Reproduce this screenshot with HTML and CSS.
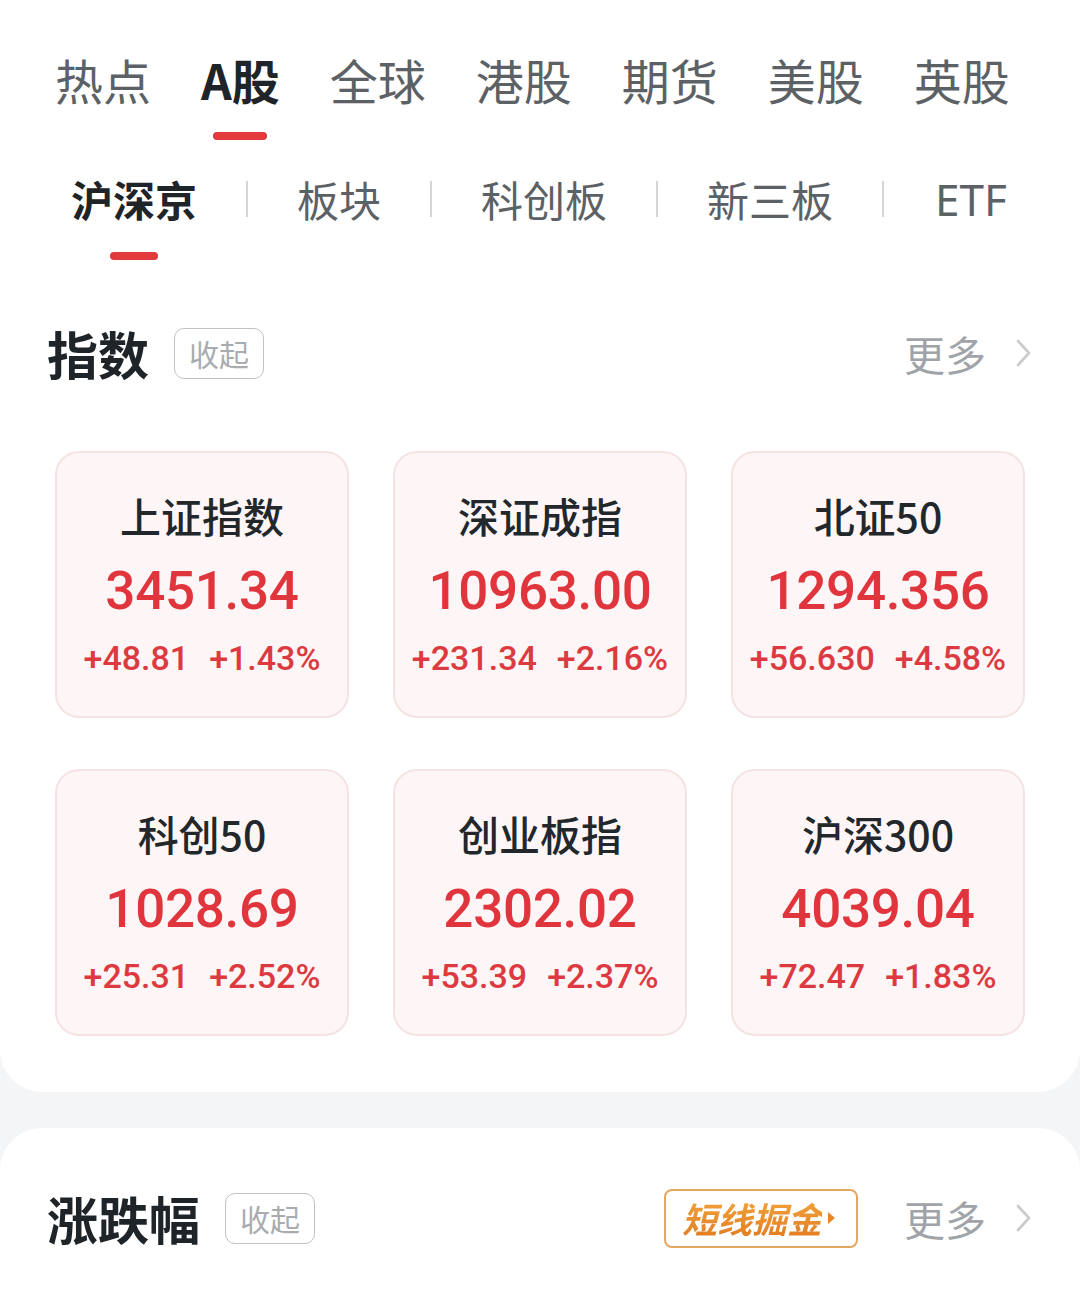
FILE: index.html
```html
<!DOCTYPE html>
<html lang="zh-CN">
<head>
    <meta charset="UTF-8">
    <meta name="viewport" content="width=device-width, initial-scale=1.0">
    <title>行情</title>
    <link rel="stylesheet" href="styles.css">
</head>
<body>
    <div class="panel topPanel">
        <div class="mainTabs">
            <div class="mainTab"><span class="tabText">热点</span><i class="tabLine"></i></div>
            <div class="mainTab active"><span class="tabText">A股</span><i class="tabLine"></i></div>
            <div class="mainTab"><span class="tabText">全球</span><i class="tabLine"></i></div>
            <div class="mainTab"><span class="tabText">港股</span><i class="tabLine"></i></div>
            <div class="mainTab"><span class="tabText">期货</span><i class="tabLine"></i></div>
            <div class="mainTab"><span class="tabText">美股</span><i class="tabLine"></i></div>
            <div class="mainTab"><span class="tabText">英股</span><i class="tabLine"></i></div>
        </div>

        <div class="subTabs">
            <div class="subTab active"><span class="subText">沪深京</span><i class="subLine"></i></div>
            <span class="divider"></span>
            <div class="subTab"><span class="subText">板块</span><i class="subLine"></i></div>
            <span class="divider"></span>
            <div class="subTab"><span class="subText">科创板</span><i class="subLine"></i></div>
            <span class="divider"></span>
            <div class="subTab"><span class="subText">新三板</span><i class="subLine"></i></div>
            <span class="divider"></span>
            <div class="subTab"><span class="subText">ETF</span><i class="subLine"></i></div>
        </div>

        <div class="sectionHead indexHead">
            <span class="sectionTitle">指数</span>
            <span class="foldBtn">收起</span>
            <div class="headRight">
                <span class="more">更多</span>
                <svg class="chevron" width="16" height="28" viewBox="0 0 16 28">
                    <path d="M2 2 L13 14 L2 26" fill="none" stroke="#c9cbcd" stroke-width="2.6" stroke-linecap="round" stroke-linejoin="round"/>
                </svg>
            </div>
        </div>

        <div class="cards">
            <div class="card">
                <p class="cardName">上证指数</p>
                <p class="cardValue">3451.34</p>
                <p class="cardChange"><span>+48.81</span><span>+1.43%</span></p>
            </div>
            <div class="card">
                <p class="cardName">深证成指</p>
                <p class="cardValue">10963.00</p>
                <p class="cardChange"><span>+231.34</span><span>+2.16%</span></p>
            </div>
            <div class="card">
                <p class="cardName">北证50</p>
                <p class="cardValue">1294.356</p>
                <p class="cardChange"><span>+56.630</span><span>+4.58%</span></p>
            </div>
            <div class="card">
                <p class="cardName">科创50</p>
                <p class="cardValue">1028.69</p>
                <p class="cardChange"><span>+25.31</span><span>+2.52%</span></p>
            </div>
            <div class="card">
                <p class="cardName">创业板指</p>
                <p class="cardValue">2302.02</p>
                <p class="cardChange"><span>+53.39</span><span>+2.37%</span></p>
            </div>
            <div class="card">
                <p class="cardName">沪深300</p>
                <p class="cardValue">4039.04</p>
                <p class="cardChange"><span>+72.47</span><span>+1.83%</span></p>
            </div>
        </div>
    </div>

    <div class="panel bottomPanel">
        <div class="sectionHead">
            <span class="sectionTitle">涨跌幅</span>
            <span class="foldBtn">收起</span>
            <div class="headRight">
                <span class="goldBtn"><span class="goldText">短线掘金</span><i class="goldArrow"></i></span>
                <span class="more">更多</span>
                <svg class="chevron" width="16" height="28" viewBox="0 0 16 28">
                    <path d="M2 2 L13 14 L2 26" fill="none" stroke="#c9cbcd" stroke-width="2.6" stroke-linecap="round" stroke-linejoin="round"/>
                </svg>
            </div>
        </div>
    </div>
</body>
</html>
```

FILE: styles.css
```css
html,body{
    margin: 0;
    padding: 0;
    width: 1080px;
    background-color: #f4f5f7;
    font-family: "Noto Sans CJK SC", "Noto Sans", sans-serif;
    color: #1f2429;
}
p{
    margin: 0;
    padding: 0;
}
.panel{
    background-color: #ffffff;
}
.topPanel{
    border-radius: 0 0 42px 42px;
    padding-bottom: 56px;
}
.bottomPanel{
    margin-top: 36px;
    border-radius: 42px 42px 0 0;
    padding-top: 58px;
    min-height: 200px;
}

/* 顶部一级tab */
.mainTabs{
    display: flex;
    flex-direction: row;
    gap: 50px;
    padding: 47px 0 0 55px;
}
.mainTab{
    display: flex;
    flex-direction: column;
    align-items: center;
}
.tabText{
    font-size: 48px;
    line-height: 64px;
    color: #5c6166;
}
.tabLine{
    display: block;
    width: 54px;
    height: 8px;
    margin-top: 21px;
    border-radius: 4px;
}
.mainTab.active .tabText{
    color: #1f2429;
    font-weight: bold;
}
.mainTab.active .tabLine{
    background-color: #e2393b;
}

/* 二级tab */
.subTabs{
    display: flex;
    flex-direction: row;
    align-items: flex-start;
    gap: 49px;
    padding: 31px 0 0 71px;
}
.subTab{
    display: flex;
    flex-direction: column;
    align-items: center;
}
.subText{
    font-size: 42px;
    line-height: 56px;
    color: #5c6166;
}
.subTab:last-child{
    margin-left: 2px;
}
.subTab:last-child .subText{
    font-family: "Noto Sans", "Noto Sans CJK SC", sans-serif;
    font-size: 44px;
}
.subLine{
    display: block;
    width: 48px;
    height: 8px;
    margin-top: 25px;
    border-radius: 4px;
}
.subTab.active .subText{
    color: #1f2429;
    font-weight: bold;
}
.subTab.active .subLine{
    background-color: #e2393b;
}
.divider{
    width: 2px;
    height: 36px;
    margin-top: 10px;
    background-color: #d4d6d8;
}

/* 区块标题 */
.sectionHead{
    display: flex;
    flex-direction: row;
    align-items: center;
    height: 64px;
    padding: 0 48px 0 47px;
}
.indexHead{
    margin-top: 61px;
}
.sectionTitle{
    font-size: 51px;
    font-weight: bold;
    color: #1f2429;
    line-height: 64px;
}
.foldBtn{
    margin-left: 25px;
    box-sizing: border-box;
    height: 51px;
    padding: 0 14px;
    border: 1.5px solid #bfc1c3;
    border-radius: 10px;
    font-size: 30px;
    line-height: 48px;
    color: #a9acaf;
}
.headRight{
    margin-left: auto;
    display: flex;
    flex-direction: row;
    align-items: center;
}
.more{
    font-size: 41px;
    line-height: 56px;
    color: #a0a4a8;
}
.chevron{
    margin-left: 30px;
}
.goldBtn{
    display: flex;
    align-items: center;
    box-sizing: border-box;
    height: 59px;
    width: 194px;
    padding-left: 16px;
    margin-right: 46px;
    border: 2px solid #e3a762;
    border-radius: 8px;
}
.goldText{
    font-size: 35px;
    line-height: 50px;
    font-weight: bold;
    font-style: italic;
    background: linear-gradient(180deg, #f3a940 0%, #e1781f 100%);
    -webkit-background-clip: text;
    background-clip: text;
    color: transparent;
}
.goldArrow{
    display: block;
    width: 0;
    height: 0;
    margin-left: 6px;
    border-top: 6px solid transparent;
    border-bottom: 6px solid transparent;
    border-left: 7px solid #e5882a;
}

/* 指数卡片 */
.cards{
    display: grid;
    grid-template-columns: repeat(3, 294px);
    column-gap: 44px;
    row-gap: 51px;
    padding: 0 55px;
    margin-top: 66px;
}
.card{
    box-sizing: border-box;
    height: 267px;
    padding-top: 34px;
    background-color: #fef6f6;
    border: 2px solid #f5e3e3;
    border-radius: 24px;
    display: flex;
    flex-direction: column;
    align-items: center;
}
.cardName{
    font-size: 41px;
    line-height: 56px;
    font-weight: 500;
    color: #22272c;
}
.cardValue{
    margin-top: 11px;
    font-family: Roboto, "Noto Sans", sans-serif;
    font-size: 53px;
    line-height: 74px;
    font-weight: 500;
    letter-spacing: -0.3px;
    color: #e0353c;
}
.cardChange{
    display: flex;
    flex-direction: row;
    gap: 20px;
    font-family: Roboto, "Noto Sans", sans-serif;
    font-size: 34px;
    line-height: 60px;
    font-weight: 500;
    color: #dc3a40;
}
```
